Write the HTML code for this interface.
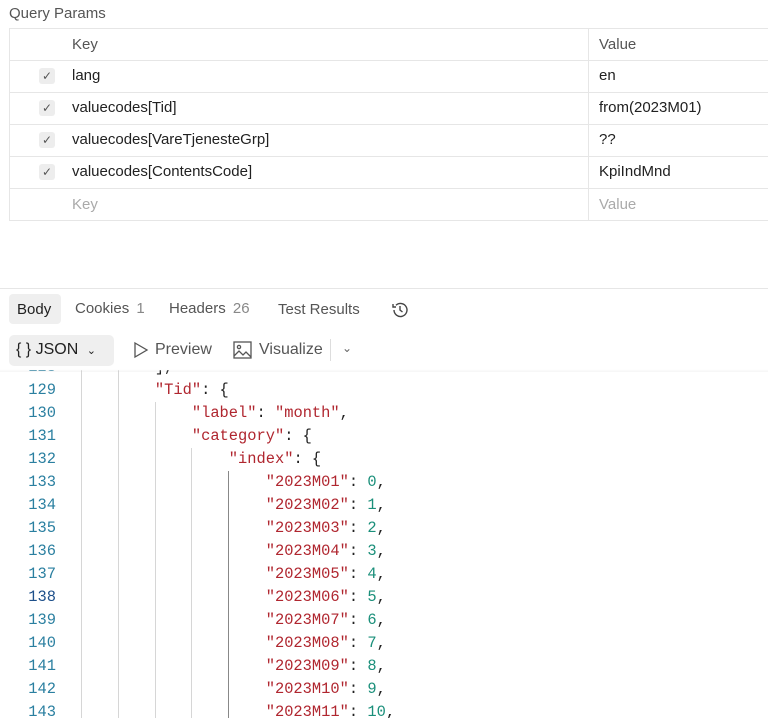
<!DOCTYPE html>
<html><head><meta charset="utf-8"><style>
*{margin:0;padding:0;box-sizing:border-box}
body{width:768px;height:718px;overflow:hidden;background:#fff;font-family:"Liberation Sans",sans-serif;color:#212121;position:relative}
.a{position:absolute;white-space:nowrap}
.hl{position:absolute;left:9px;right:0;height:1px;background:#e6e6e6}
.t{font-size:15px;color:#212121}
.chk{position:absolute;left:39px;width:16px;height:16px;border-radius:3px;background:#ededed;color:#555;font-size:12px;text-align:center;line-height:16px}
.code{position:absolute;left:0;top:370px;width:768px;height:348px;overflow:hidden;font-family:"Liberation Mono",monospace;font-size:15.4px}
.ln{position:absolute;width:56px;text-align:right;color:#2a7fa0;left:0}
.cl{position:absolute;left:81px;white-space:pre;color:#212121}
.g{position:absolute;width:1px;background:#d6d6d6}
.s{color:#b0262f}.n{color:#1a8f7a}
</style></head><body>
<div class="a" style="left:9px;top:5px;font-size:15px;color:#555">Query Params</div>
<div class="hl" style="top:28px"></div>
<div class="hl" style="top:60px"></div>
<div class="hl" style="top:92px"></div>
<div class="hl" style="top:124px"></div>
<div class="hl" style="top:156px"></div>
<div class="hl" style="top:188px"></div>
<div class="hl" style="top:220px"></div>
<div class="a" style="left:9px;top:28px;width:1px;height:193px;background:#e6e6e6"></div>
<div class="a" style="left:588px;top:28px;width:1px;height:193px;background:#e6e6e6"></div>
<div class="a t" style="left:72px;top:36px;color:#555">Key</div><div class="a t" style="left:599px;top:36px;color:#555">Value</div>
<div class="chk" style="top:68px">✓</div><div class="a t" style="left:72px;top:67px">lang</div><div class="a t" style="left:599px;top:67px">en</div>
<div class="chk" style="top:100px">✓</div><div class="a t" style="left:72px;top:99px">valuecodes[Tid]</div><div class="a t" style="left:599px;top:99px">from(2023M01)</div>
<div class="chk" style="top:132px">✓</div><div class="a t" style="left:72px;top:131px">valuecodes[VareTjenesteGrp]</div><div class="a t" style="left:599px;top:131px">??</div>
<div class="chk" style="top:164px">✓</div><div class="a t" style="left:72px;top:163px">valuecodes[ContentsCode]</div><div class="a t" style="left:599px;top:163px">KpiIndMnd</div>
<div class="a t" style="left:72px;top:196px;color:#aaa">Key</div><div class="a t" style="left:599px;top:196px;color:#aaa">Value</div>

<div class="a" style="left:0;top:288px;width:768px;height:1px;background:#e6e6e6"></div>
<div class="a" style="left:9px;top:294px;width:52px;height:30px;background:#efefef;border-radius:4px"></div>
<div class="a t" style="left:17px;top:301px">Body</div>
<div class="a t" style="left:75px;top:300px;color:#555">Cookies <span style="color:#888;margin-left:3px">1</span></div>
<div class="a t" style="left:169px;top:300px;color:#555">Headers <span style="color:#888;margin-left:3px">26</span></div>
<div class="a t" style="left:278px;top:301px;color:#555">Test Results</div>
<svg class="a" style="left:390px;top:300px" width="20" height="20" viewBox="0 0 20 20" fill="none" stroke="#444" stroke-width="1.4"><path d="M4 10a6.5 6.5 0 1 0 2-4.7"/><path d="M3 4v3h3"/><path d="M10 6v4l2.5 2"/></svg>
<div class="a" style="left:9px;top:335px;width:105px;height:31px;background:#efefef;border-radius:5px"></div>
<div class="a t" style="left:16px;top:341px;font-size:16px">{ } JSON <span style="font-size:11px;margin-left:4px">⌄</span></div>
<svg class="a" style="left:132px;top:341px" width="18" height="18" viewBox="0 0 18 18" fill="none" stroke="#555" stroke-width="1.3"><path d="M3 2l12 7-12 7z"/></svg>
<div class="a t" style="left:155px;top:341px;color:#555;font-size:16px">Preview</div>
<svg class="a" style="left:233px;top:341px" width="20" height="18" viewBox="0 0 20 18" fill="none" stroke="#555" stroke-width="1.3"><rect x="1" y="1" width="17" height="16"/><circle cx="6" cy="6" r="1.6"/><path d="M1 15l5-5 4 4 3-3 5 5"/></svg>
<div class="a t" style="left:259px;top:341px;color:#555;font-size:16px">Visualize</div>
<div class="a" style="left:330px;top:339px;width:1px;height:22px;background:#ddd"></div>
<div class="a" style="left:342px;top:341px;color:#666;font-size:12px">⌄</div>

<div class="code">
<div class="g" style="left:81px;top:0;height:348px"></div>
<div class="g" style="left:118px;top:0;height:348px"></div>
<div class="g" style="left:155px;top:32px;height:316px"></div>
<div class="g" style="left:191px;top:78px;height:270px"></div>
<div class="g" style="left:228px;top:101px;height:247px;background:#888"></div>
<div class="ln" style="top:-12px">128</div><div class="cl" style="top:-12px">        ],</div>
<div class="ln" style="top:11px">129</div><div class="cl" style="top:11px">        <span class="s">"Tid"</span>: {</div>
<div class="ln" style="top:34px">130</div><div class="cl" style="top:34px">            <span class="s">"label"</span>: <span class="s">"month"</span>,</div>
<div class="ln" style="top:57px">131</div><div class="cl" style="top:57px">            <span class="s">"category"</span>: {</div>
<div class="ln" style="top:80px">132</div><div class="cl" style="top:80px">                <span class="s">"index"</span>: {</div>
<div class="ln" style="top:103px">133</div><div class="cl" style="top:103px">                    <span class="s">"2023M01"</span>: <span class="n">0</span>,</div>
<div class="ln" style="top:126px">134</div><div class="cl" style="top:126px">                    <span class="s">"2023M02"</span>: <span class="n">1</span>,</div>
<div class="ln" style="top:149px">135</div><div class="cl" style="top:149px">                    <span class="s">"2023M03"</span>: <span class="n">2</span>,</div>
<div class="ln" style="top:172px">136</div><div class="cl" style="top:172px">                    <span class="s">"2023M04"</span>: <span class="n">3</span>,</div>
<div class="ln" style="top:195px">137</div><div class="cl" style="top:195px">                    <span class="s">"2023M05"</span>: <span class="n">4</span>,</div>
<div class="ln" style="top:218px;color:#1d4f8a">138</div><div class="cl" style="top:218px">                    <span class="s">"2023M06"</span>: <span class="n">5</span>,</div>
<div class="ln" style="top:241px">139</div><div class="cl" style="top:241px">                    <span class="s">"2023M07"</span>: <span class="n">6</span>,</div>
<div class="ln" style="top:264px">140</div><div class="cl" style="top:264px">                    <span class="s">"2023M08"</span>: <span class="n">7</span>,</div>
<div class="ln" style="top:287px">141</div><div class="cl" style="top:287px">                    <span class="s">"2023M09"</span>: <span class="n">8</span>,</div>
<div class="ln" style="top:310px">142</div><div class="cl" style="top:310px">                    <span class="s">"2023M10"</span>: <span class="n">9</span>,</div>
<div class="ln" style="top:333px">143</div><div class="cl" style="top:333px">                    <span class="s">"2023M11"</span>: <span class="n">10</span>,</div>
</div>
<div class="a" style="left:0;top:366px;width:768px;height:6px;background:linear-gradient(#fff,rgba(255,255,255,0.6),rgba(0,0,0,0.04))"></div>
</body></html>
